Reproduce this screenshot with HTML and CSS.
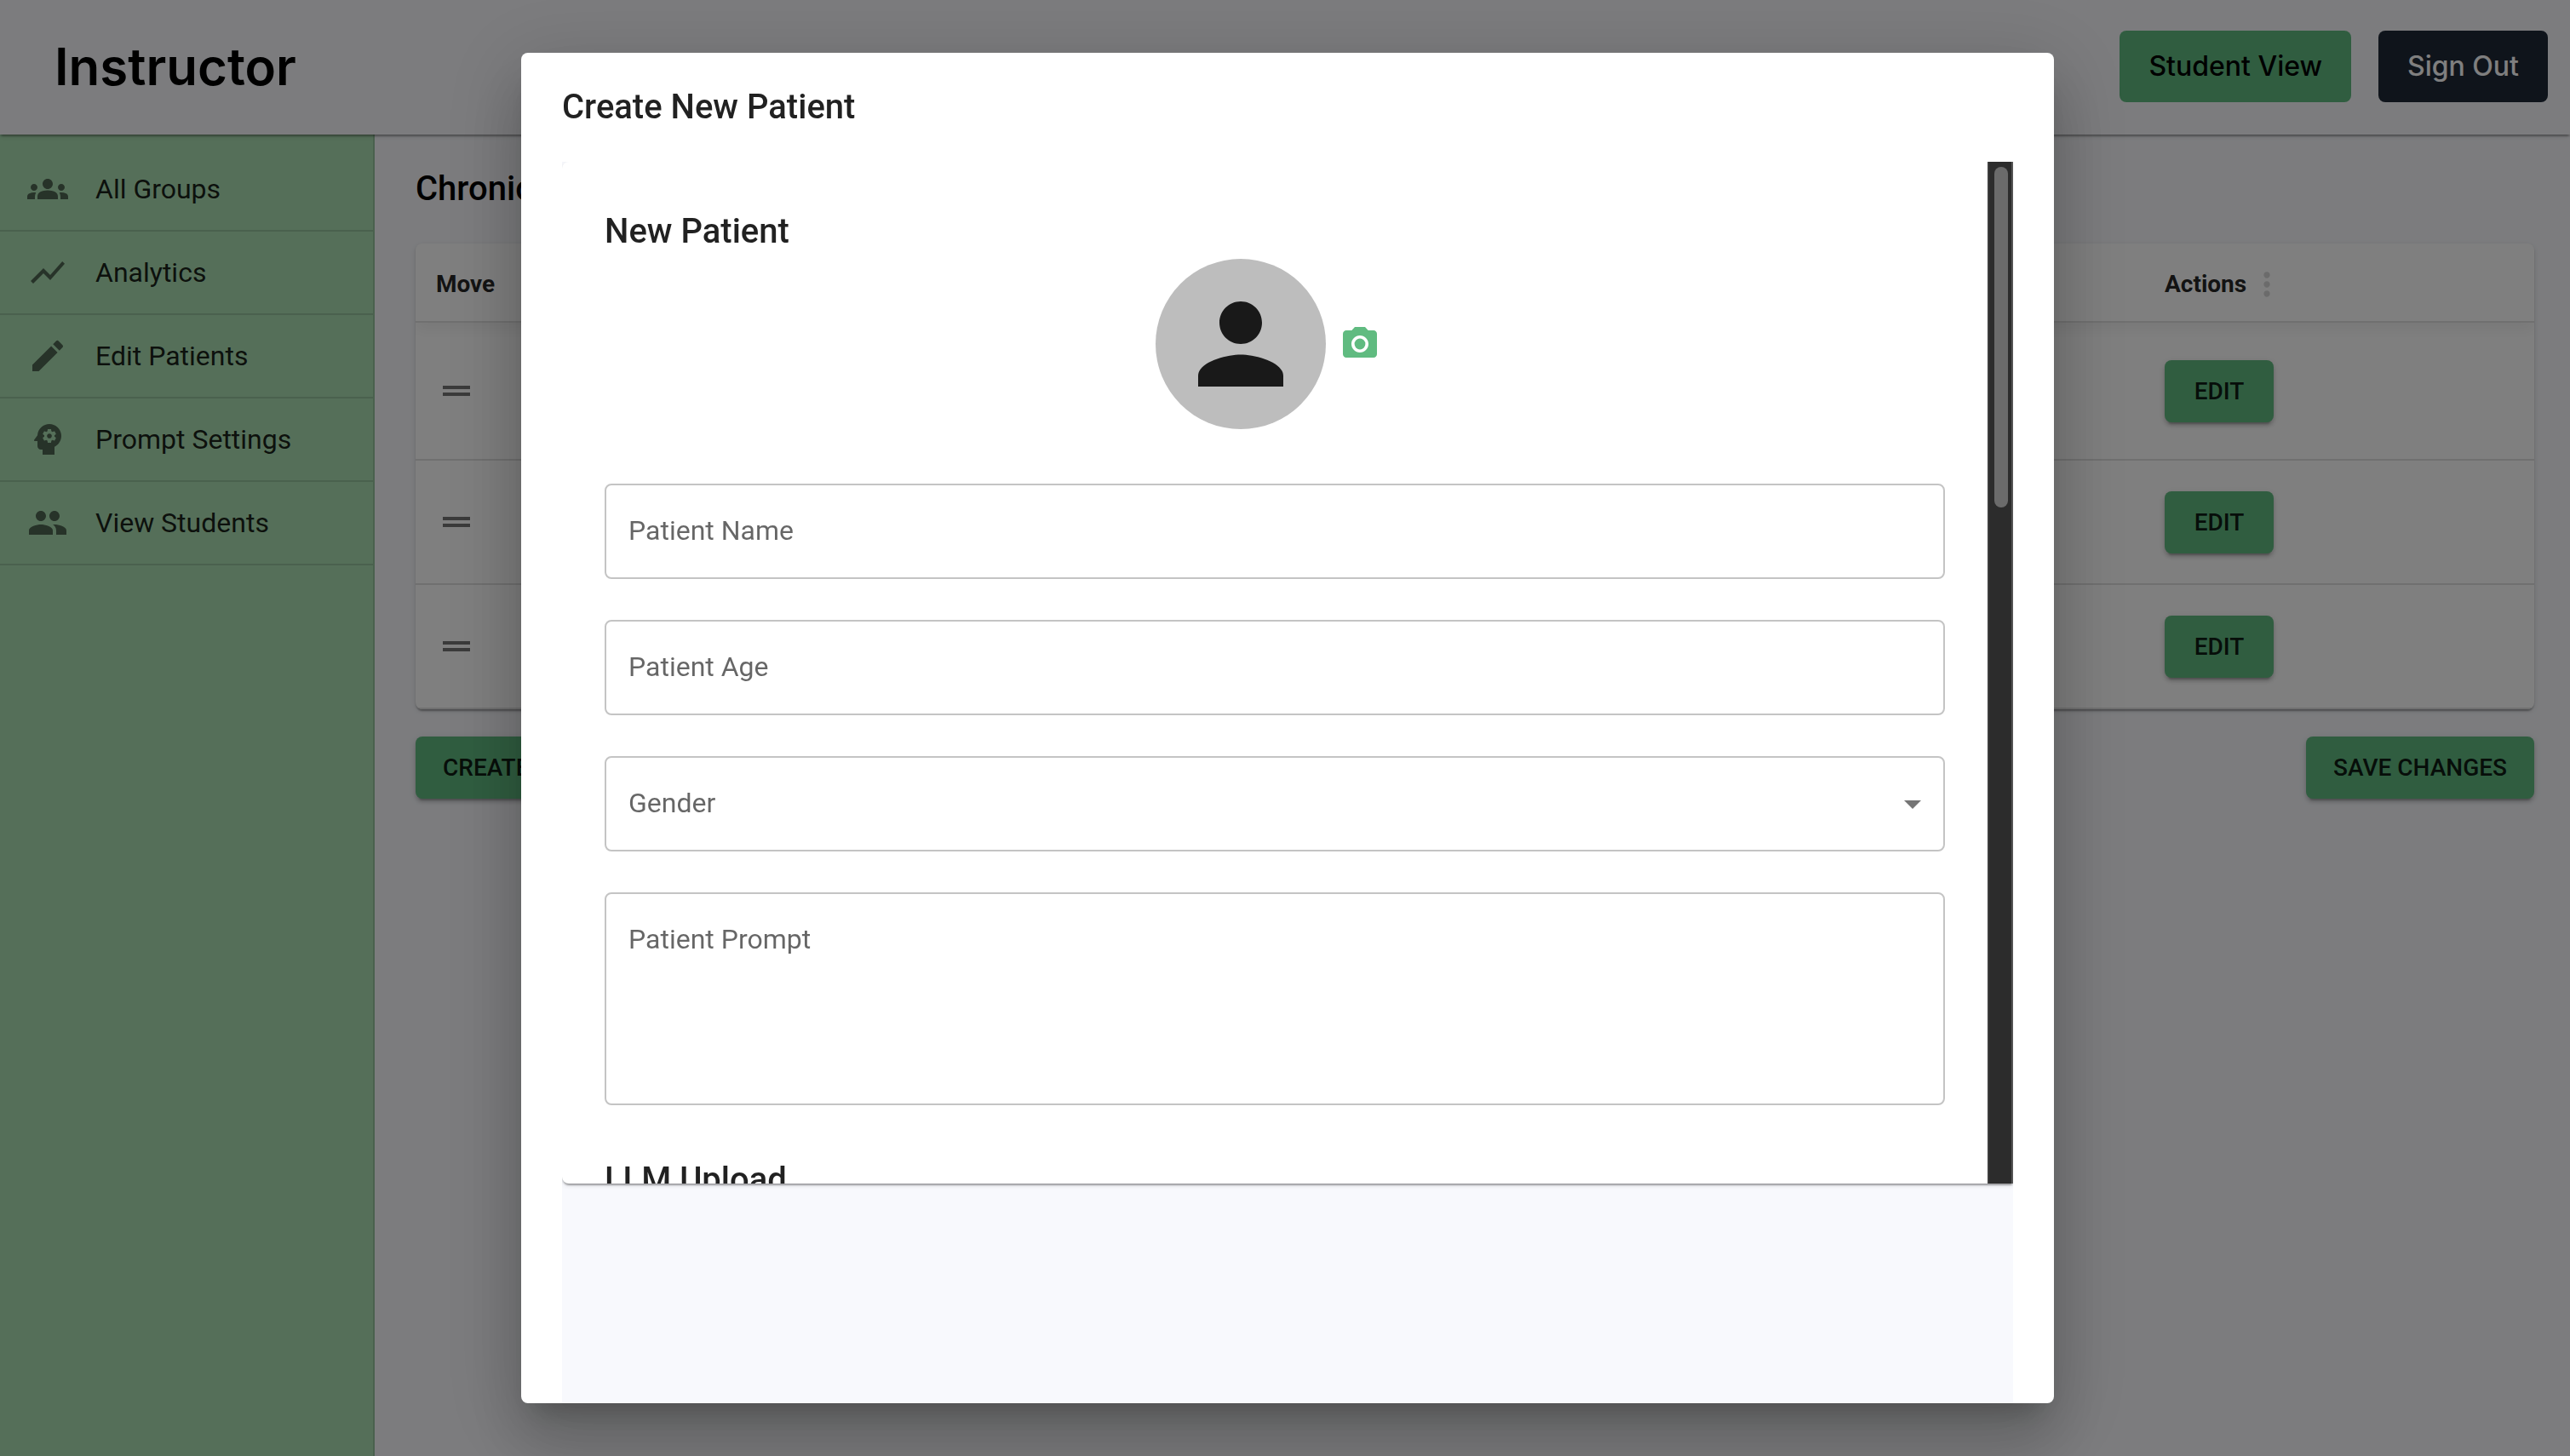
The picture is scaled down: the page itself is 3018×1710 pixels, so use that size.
FILE: index.html
```html
<!DOCTYPE html>
<html lang="en">
<head>
<meta charset="utf-8">
<title>Instructor</title>
<link rel="stylesheet" href="styles.css">
</head>
<body>
<div class="app">
  <header class="topbar">
    <h1 class="brand">Instructor</h1>
    <div class="topbar-actions">
      <button class="nav-btn nav-btn-green" type="button">Student View</button>
      <button class="nav-btn nav-btn-dark" type="button">Sign Out</button>
    </div>
  </header>
  <div class="body">
    <nav class="sidebar">
      <a class="side-link" href="#groups">
        <svg class="icon" viewBox="0 0 24 24"><path d="M12 12.75c1.63 0 3.07.39 4.24.9 1.08.48 1.76 1.56 1.76 2.73V18H6v-1.61c0-1.18.68-2.26 1.76-2.73 1.17-.52 2.61-.91 4.24-.91zM4 13c1.1 0 2-.9 2-2s-.9-2-2-2-2 .9-2 2 .9 2 2 2zm1.13 1.1c-.37-.06-.74-.1-1.13-.1-.99 0-1.93.21-2.78.58C.48 14.9 0 15.62 0 16.43V18h4.5v-1.61c0-.83.23-1.61.63-2.29zM20 13c1.1 0 2-.9 2-2s-.9-2-2-2-2 .9-2 2 .9 2 2 2zm4 3.43c0-.81-.48-1.53-1.22-1.85-.85-.37-1.79-.58-2.78-.58-.39 0-.76.04-1.13.1.4.68.63 1.46.63 2.29V18H24v-1.57zM12 6c1.66 0 3 1.34 3 3s-1.34 3-3 3-3-1.34-3-3 1.34-3 3-3z"/></svg>
        <span>All Groups</span>
      </a>
      <a class="side-link" href="#analytics">
        <svg class="icon" viewBox="0 0 24 24"><path d="m3.5 18.49 6-6.01 4 4L22 6.92l-1.41-1.41-7.09 7.97-4-4L2 16.99z"/></svg>
        <span>Analytics</span>
      </a>
      <a class="side-link" href="#patients">
        <svg class="icon" viewBox="0 0 24 24"><path d="M3 17.25V21h3.75L17.81 9.94l-3.75-3.75L3 17.25zM20.71 7.04c.39-.39.39-1.02 0-1.41l-2.34-2.34a.9959.9959 0 0 0-1.41 0l-1.83 1.83 3.75 3.75 1.83-1.83z"/></svg>
        <span>Edit Patients</span>
      </a>
      <a class="side-link" href="#prompts">
        <svg class="icon" viewBox="0 0 24 24"><path d="M13 8.57c-.79 0-1.43.64-1.43 1.43s.64 1.43 1.43 1.43 1.43-.64 1.43-1.43-.64-1.43-1.43-1.43z"/><path d="M13 3C9.25 3 6.2 5.94 6.02 9.64L4.1 12.2c-.25.33-.01.8.4.8H6v3c0 1.1.9 2 2 2h1v3h7v-4.68c2.36-1.12 4-3.53 4-6.32 0-3.87-3.13-7-7-7zm3 7c0 .13-.01.26-.02.39l.83.66c.08.06.1.16.05.25l-.8 1.39c-.05.09-.16.12-.24.09l-.99-.4c-.21.16-.43.29-.67.39L14 13.83c-.01.1-.1.17-.2.17h-1.6c-.1 0-.18-.07-.2-.17l-.15-1.06c-.25-.1-.47-.23-.68-.39l-.99.4c-.09.03-.2 0-.25-.09l-.8-1.39c-.05-.08-.03-.19.05-.25l.84-.66c-.01-.13-.02-.26-.02-.39s.02-.27.04-.39l-.85-.66c-.08-.06-.1-.16-.05-.26l.8-1.38c.05-.09.15-.12.24-.09l1 .4c.2-.15.43-.29.67-.39L12 6.17c.02-.1.1-.17.2-.17h1.6c.1 0 .18.07.2.17l.15 1.06c.24.1.46.23.67.39l1-.4c.09-.03.2 0 .24.09l.8 1.38c.05.09.03.2-.05.26l-.85.66c.03.12.04.25.04.39z"/></svg>
        <span>Prompt Settings</span>
      </a>
      <a class="side-link" href="#students">
        <svg class="icon" viewBox="0 0 24 24"><path d="M16 11c1.66 0 2.99-1.34 2.99-3S17.66 5 16 5c-1.66 0-3 1.34-3 3s1.34 3 3 3zm-8 0c1.66 0 2.99-1.34 2.99-3S9.66 5 8 5C6.34 5 5 6.34 5 8s1.34 3 3 3zm0 2c-2.33 0-7 1.17-7 3.5V19h14v-2.5c0-2.33-4.67-3.5-7-3.5zm8 0c-.29 0-.62.02-.97.05 1.16.84 1.97 1.97 1.97 3.45V19h6v-2.5c0-2.33-4.67-3.5-7-3.5z"/></svg>
        <span>View Students</span>
      </a>
    </nav>
    <main class="main">
      <h2 class="heading">Chronic</h2>
      <div class="table-card">
        <table class="table">
          <colgroup><col class="col-move"><col><col class="col-actions"></colgroup>
          <thead>
            <tr>
              <th>Move</th>
              <th></th>
              <th>
                <div class="th-inner">Actions
                  <svg class="icon-more" viewBox="0 0 24 24"><path d="M12 8c1.1 0 2-.9 2-2s-.9-2-2-2-2 .9-2 2 .9 2 2 2zm0 2c-1.1 0-2 .9-2 2s.9 2 2 2 2-.9 2-2-.9-2-2-2zm0 6c-1.1 0-2 .9-2 2s.9 2 2 2 2-.9 2-2-.9-2-2-2z"/></svg>
                </div>
              </th>
            </tr>
          </thead>
          <tbody>
            <tr class="row-tall">
              <td><svg class="icon" viewBox="0 0 24 24"><path d="M20 9H4v2h16V9zM4 15h16v-2H4v2z"/></svg></td>
              <td></td>
              <td><button class="btn" type="button">EDIT</button></td>
            </tr>
            <tr>
              <td><svg class="icon" viewBox="0 0 24 24"><path d="M20 9H4v2h16V9zM4 15h16v-2H4v2z"/></svg></td>
              <td></td>
              <td><button class="btn" type="button">EDIT</button></td>
            </tr>
            <tr>
              <td><svg class="icon" viewBox="0 0 24 24"><path d="M20 9H4v2h16V9zM4 15h16v-2H4v2z"/></svg></td>
              <td></td>
              <td><button class="btn" type="button">EDIT</button></td>
            </tr>
          </tbody>
        </table>
      </div>
      <div class="main-actions">
        <button class="btn" type="button">CREATE PATIENT</button>
        <button class="btn" type="button">SAVE CHANGES</button>
      </div>
    </main>
  </div>
</div>

<div class="backdrop">
  <section class="dialog" role="dialog" aria-labelledby="dialog-title">
    <h2 class="dialog-title" id="dialog-title">Create New Patient</h2>
    <div class="dialog-content">
      <div class="paper">
        <form class="form">
          <h3 class="form-heading">New Patient</h3>
          <div class="avatar-row">
            <div class="avatar">
              <svg class="avatar-icon" viewBox="4 4 16 16"><path d="M12 12c2.21 0 4-1.79 4-4s-1.79-4-4-4-4 1.79-4 4 1.79 4 4 4zm0 2c-2.67 0-8 1.34-8 4v2h16v-2c0-2.66-5.33-4-8-4z"/></svg>
            </div>
            <button class="photo-btn" type="button" aria-label="Upload photo">
              <svg class="icon" viewBox="0 0 24 24"><circle cx="12" cy="12" r="3.2"/><path d="M9 2 7.17 4H4c-1.1 0-2 .9-2 2v12c0 1.1.9 2 2 2h16c1.1 0 2-.9 2-2V6c0-1.1-.9-2-2-2h-3.17L15 2H9zm3 15c-2.76 0-5-2.24-5-5s2.24-5 5-5 5 2.24 5 5-2.24 5-5 5z"/></svg>
            </button>
          </div>
          <div class="field">
            <input class="control" id="name" type="text">
            <label class="label" for="name">Patient Name</label>
          </div>
          <div class="field">
            <input class="control" id="age" type="text">
            <label class="label" for="age">Patient Age</label>
          </div>
          <div class="field">
            <select class="control" id="gender"><option></option></select>
            <label class="label" for="gender">Gender</label>
            <svg class="icon arrow" viewBox="0 0 24 24"><path d="m7 10 5 5 5-5z"/></svg>
          </div>
          <div class="field">
            <textarea class="control control-area" id="prompt"></textarea>
            <label class="label" for="prompt">Patient Prompt</label>
          </div>
          <h3 class="form-heading form-heading-next">LLM Upload</h3>
        </form>
        <div class="scrollbar"><div class="thumb"></div></div>
      </div>
    </div>
  </section>
</div>
</body>
</html>
```
FILE: styles.css
```css
* { box-sizing: border-box; }

body {
  margin: 0;
  background: #f8f9fd;
  color: rgba(0, 0, 0, 0.87);
  font-family: Roboto, "Liberation Sans", sans-serif;
  font-size: 32px;
  line-height: 46px;
}

h1, h2, h3 { margin: 0; }
button, input, select, textarea { font: inherit; color: inherit; }

.icon {
  display: block;
  width: 48px;
  height: 48px;
  fill: rgba(0, 0, 0, 0.54);
}

.app {
  display: flex;
  flex-direction: column;
  height: 100vh;
  overflow: hidden;
}

.topbar {
  position: relative;
  z-index: 1;
  display: flex;
  align-items: center;
  justify-content: space-between;
  height: 158px;
  padding: 0 26px 2px 64px;
  background: #f8f9fd;
  box-shadow: 0 4px 2px -2px rgba(0, 0, 0, 0.2), 0 2px 2px rgba(0, 0, 0, 0.14), 0 2px 6px rgba(0, 0, 0, 0.12);
}

.brand {
  color: #000;
  font: 600 60px/72px Inter, sans-serif;
}

.topbar-actions {
  display: flex;
  gap: 32px;
}

.nav-btn {
  padding: 18px 34px;
  border: 0;
  border-radius: 8px;
  font: 500 32px/48px Inter, sans-serif;
}

.nav-btn-green { background: #60bb80; color: #000; }
.nav-btn-dark { background: #1f2937; color: #fff; }

.body {
  display: flex;
  flex: 1;
}

.sidebar {
  width: 440px;
  padding-top: 16px;
  border-right: 2px solid rgba(0, 0, 0, 0.12);
  background: #aadeb2;
}

.side-link {
  display: flex;
  align-items: center;
  gap: 32px;
  height: 98px;
  padding: 0 32px;
  border-bottom: 2px solid rgba(0, 0, 0, 0.12);
  color: inherit;
  text-decoration: none;
}

.main {
  display: flex;
  flex: 1;
  flex-direction: column;
  gap: 32px;
  padding: 32px 42px 32px 48px;
}

.heading {
  color: #000;
  font-size: 40px;
  font-weight: 500;
  line-height: 64px;
}

.table-card {
  overflow: hidden;
  border-radius: 8px;
}

.table-card,
.paper {
  background: #fff;
  box-shadow: 0 4px 2px -2px rgba(0, 0, 0, 0.2), 0 2px 2px rgba(0, 0, 0, 0.14), 0 2px 6px rgba(0, 0, 0, 0.12);
}

.table {
  width: 100%;
  border-collapse: separate;
  border-spacing: 0;
  table-layout: fixed;
}

.col-move { width: 240px; }
.col-actions { width: 458px; }

.table thead { box-shadow: 0 8px 16px rgba(0, 0, 0, 0.06); }

.table th,
.table td {
  padding: 0 24px;
  border-bottom: 2px solid #e0e0e0;
  text-align: left;
}

.table th {
  height: 93px;
  padding-top: 4px;
  font-size: 28px;
  font-weight: 700;
}

.table td { height: 146px; }
.table .row-tall td { height: 162px; }

.th-inner {
  display: flex;
  align-items: center;
}

.icon-more {
  width: 44px;
  height: 44px;
  margin-left: 2px;
  fill: rgba(0, 0, 0, 0.16);
}

.btn {
  display: block;
  min-width: 128px;
  padding: 12px 32px;
  border: 0;
  border-radius: 8px;
  background: #60bb80;
  box-shadow: 0 6px 2px -4px rgba(0, 0, 0, 0.2), 0 4px 4px rgba(0, 0, 0, 0.14), 0 2px 10px rgba(0, 0, 0, 0.12);
  font-size: 28px;
  font-weight: 500;
  line-height: 49px;
}

.main-actions {
  display: flex;
  justify-content: space-between;
}

.backdrop {
  position: fixed;
  inset: 0;
  z-index: 2;
  display: flex;
  justify-content: center;
  padding: 62px;
  background: rgba(0, 0, 0, 0.5);
}

.dialog {
  display: flex;
  flex-direction: column;
  width: 100%;
  max-width: 1800px;
  margin-left: 6px;
  overflow: hidden;
  border-radius: 8px;
  background: #fff;
  box-shadow: 0 22px 30px -14px rgba(0, 0, 0, 0.2), 0 48px 76px 6px rgba(0, 0, 0, 0.14), 0 18px 92px 16px rgba(0, 0, 0, 0.12);
}

.dialog-title {
  padding: 32px 48px;
  font-size: 40px;
  font-weight: 500;
  line-height: 64px;
}

.dialog-content {
  flex: 1;
  min-height: 0;
  margin: 0 48px;
  overflow: hidden;
  background: #f8f9fd;
}

.paper {
  display: flex;
  height: 1200px;
  overflow: hidden;
  border-radius: 8px 0 0 8px;
}

.form {
  display: flex;
  flex: 1;
  flex-direction: column;
  gap: 48px;
  padding: 50px;
}

.form-heading {
  font-size: 40px;
  font-weight: 500;
  line-height: 64px;
}

.form-heading-next { margin-top: 8px; }

.avatar-row {
  display: flex;
  align-items: center;
  justify-content: center;
  margin: -48px 0 16px;
}

.avatar {
  display: flex;
  align-items: center;
  justify-content: center;
  width: 200px;
  height: 200px;
  border-radius: 50%;
  background: #bdbdbd;
}

.avatar-icon {
  width: 100px;
  height: 100px;
  fill: #191919;
}

.photo-btn {
  padding: 16px;
  border: 0;
  background: none;
}

.photo-btn .icon { fill: #60bb80; }

.field { display: grid; }

.field > * { grid-area: 1 / 1; }

.control {
  width: 100%;
  height: 112px;
  padding: 0 28px;
  border: 2px solid #c4c4c4;
  border-radius: 8px;
  background: none;
  appearance: none;
}

.control-area {
  height: 250px;
  padding: 32px 28px;
  resize: none;
}

.label {
  padding: 32px 28px;
  color: rgba(0, 0, 0, 0.6);
  pointer-events: none;
}

.arrow {
  align-self: center;
  justify-self: end;
  margin-right: 14px;
  pointer-events: none;
}

.scrollbar {
  width: 30px;
  padding: 6px;
  border: solid #3d3d3d;
  border-width: 0 2px;
  border-right-color: #555;
  background: #2c2c2c;
}

.thumb {
  width: 16px;
  height: 400px;
  border-radius: 8px;
  background: #6b6b6b;
}
```
